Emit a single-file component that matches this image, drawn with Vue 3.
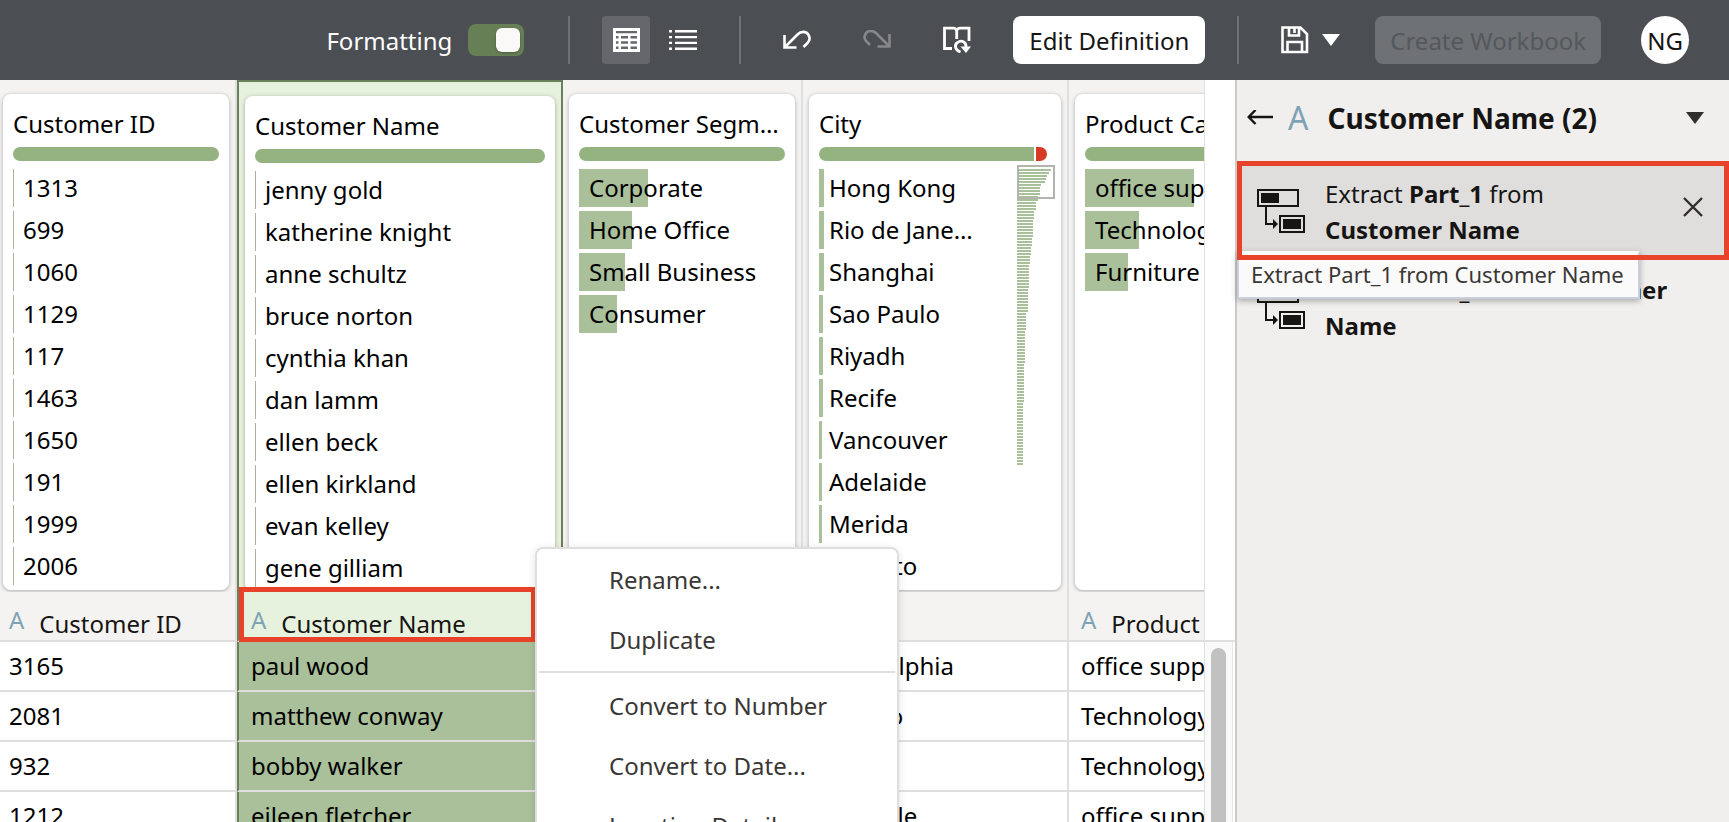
<script setup>
import { ref } from 'vue'

const formatting = ref(true)

const same = (names, width) => names.map((name) => ({ name, width }))

const columns = [
  {
    title: 'Customer ID',
    items: same(['1313', '699', '1060', '1129', '117', '1463', '1650', '191', '1999', '2006'], 1),
  },
  {
    title: 'Customer Name',
    selected: true,
    items: same(
      ['jenny gold', 'katherine knight', 'anne schultz', 'bruce norton', 'cynthia khan', 'dan lamm', 'ellen beck', 'ellen kirkland', 'evan kelley', 'gene gilliam'],
      1,
    ),
  },
  {
    title: 'Customer Segment',
    items: [
      { name: 'Corporate', width: 69 },
      { name: 'Home Office', width: 53 },
      { name: 'Small Business', width: 46 },
      { name: 'Consumer', width: 38 },
    ],
  },
  {
    title: 'City',
    invalid: true,
    minimap: true,
    items: [
      ...same(['Hong Kong', 'Rio de Janeiro', 'Shanghai'], 5),
      ...same(['Sao Paulo', 'Riyadh', 'Recife'], 4),
      ...same(['Vancouver', 'Adelaide', 'Merida', 'Toronto'], 3),
    ],
  },
  {
    title: 'Product Category',
    items: [
      { name: 'office supplies', width: 109 },
      { name: 'Technology', width: 54 },
      { name: 'Furniture', width: 43 },
    ],
  },
]

const rows = [
  ['3165', 'paul wood', 'Corporate', 'Philadelphia', 'office supplies'],
  ['2081', 'matthew conway', 'Consumer', 'Toronto', 'Technology'],
  ['932', 'bobby walker', 'Corporate', 'Recife', 'Technology'],
  ['1212', 'eileen fletcher', 'Consumer', 'Nashville', 'office supplies'],
]

const runs = [
  [34, 1], [32, 1], [30, 1], [29, 1], [28, 1], [24, 1], [23, 3], [21, 2], [19, 3], [17, 3],
  [16, 6], [15, 3], [14, 3], [13, 3], [12, 8], [11, 8], [9, 6], [8, 11], [7, 13], [6, 21],
]
const stripes = runs.flatMap(([width, count]) => Array(count).fill(width))

const steps = [
  { part: 'Part_1', active: true },
  { part: 'Part_2', active: false },
]
</script>

<template>
  <div class="app">
    <header class="toolbar">
      <label class="format" for="formatting">Formatting</label>
      <input id="formatting" v-model="formatting" class="toggle" type="checkbox" role="switch" />
      <span class="divider"></span>
      <div class="views">
        <button class="tool on" type="button" aria-label="Grid view">
          <svg width="27" height="24" viewBox="0 0 27 24">
            <path fill="#fff" fill-rule="evenodd" d="M0 0h27v24H0zM3 3v2.300h21V3zM3 8v2.500h2.500V8zM8 8v2.500h7V8zM17.500 8v2.500H24V8zM3 13.200v2.500h2.500v-2.500zM8 13.200v2.500h7v-2.500zM17.500 13.200v2.500H24v-2.500zM3 18.500V21h2.500v-2.500zM8 18.500V21h7v-2.500zM17.500 18.500V21H24v-2.500z" />
          </svg>
        </button>
        <button class="tool" type="button" aria-label="List view">
          <svg width="28" height="20" viewBox="0 0 28 20">
            <path stroke="#fff" stroke-width="2.400" d="M0 1.200h3M0 7.100h3M0 12.900h3M0 18.800h3M6 1.200h22M6 7.100h22M6 12.900h22M6 18.800h22" />
          </svg>
        </button>
      </div>
      <span class="divider"></span>
      <button class="tool" type="button" aria-label="Undo">
        <svg width="28" height="20" viewBox="0 0 28 20" fill="none" stroke="#fff" stroke-width="2.600">
          <path d="M1.500 5v12.500H13.500M2 17L14.500 4.500C18 1 23 1 25.200 4.500C27.500 8 26.500 11 24.500 13L20.500 17" />
        </svg>
      </button>
      <button class="tool" type="button" aria-label="Redo" disabled>
        <svg width="28" height="20" viewBox="0 0 28 20" fill="none" stroke="#85888b" stroke-width="2.600">
          <path d="M26.500 4v12.500H14.500M26 16L13.500 3.500C10 0 5 0 2.800 3.500C.5 7 1.500 9.500 3.500 11.500L7 15" />
        </svg>
      </button>
      <button class="tool" type="button" aria-label="Refresh data">
        <svg width="28" height="28" viewBox="0 0 28 28" fill="none" stroke="#fff" stroke-width="2.800">
          <path d="M9 22.500H1.500V2.200H10.500C12 2.200 13.700 3.200 13.700 5C13.700 3.200 15.500 2.200 17 2.200H26V15M13.700 5v8" />
          <path d="M17.500 26C12 24.500 11 19 14.500 16.500C18.500 13.500 23.500 16 23 21.500" />
          <path fill="#fff" stroke="none" d="M17.500 20.500H28L23 27z" />
        </svg>
      </button>
      <button class="primary" type="button">Edit Definition</button>
      <span class="divider"></span>
      <div class="save">
        <button class="tool" type="button" aria-label="Save">
          <svg width="28" height="28" viewBox="0 0 28 28" fill="none" stroke="#fff" stroke-width="2.600">
            <path d="M1.500 1.500H19.500L26 8V26H1.500zM8 2v7.500H18V2M6.500 26V16H21V26M13.500 2v5" />
          </svg>
        </button>
        <button class="more" type="button" aria-label="Save options">
          <svg width="18" height="12" viewBox="0 0 18 12"><path fill="#fff" d="M0 0h18L9 12z" /></svg>
        </button>
      </div>
      <button class="create" type="button" disabled>Create Workbook</button>
      <button class="avatar" type="button">NG</button>
    </header>

    <div class="body">
      <main class="workspace">
        <div class="viewport">
          <table class="grid">
            <colgroup>
              <col class="w-id" /><col class="w-name" /><col class="w-segment" /><col class="w-city" /><col class="w-product" />
            </colgroup>
            <thead>
              <tr>
                <td v-for="col in columns" :key="col.title" class="profile" :class="{ picked: col.selected }">
                  <section class="card">
                    <h2 class="card-title">{{ col.title }}</h2>
                    <div class="quality" :class="{ short: col.invalid }">
                      <span class="valid"></span>
                      <span v-if="col.invalid" class="invalid"></span>
                    </div>
                    <div class="values">
                      <ul>
                        <li v-for="item in col.items" :key="item.name">
                          <span class="bar" :class="{ thin: item.width === 1 }" :style="{ width: item.width + 'px' }"></span>
                          <span class="value">{{ item.name }}</span>
                        </li>
                      </ul>
                      <div v-if="col.minimap" class="minimap">
                        <span v-for="(w, i) in stripes" :key="i" class="stripe" :style="{ width: w + 'px' }"></span>
                        <span class="window"></span>
                      </div>
                    </div>
                  </section>
                </td>
              </tr>
              <tr>
                <th v-for="col in columns" :key="col.title" scope="col" class="head" :class="{ picked: col.selected }">
                  <span class="head-in"><span class="type">A</span><span>{{ col.title }}</span></span>
                  <span v-if="col.selected" class="head-mark"></span>
                </th>
              </tr>
            </thead>
            <tbody>
              <tr v-for="row in rows" :key="row[0]">
                <td v-for="(cell, i) in row" :key="i" class="cell" :class="{ picked: columns[i].selected }">{{ cell }}</td>
              </tr>
            </tbody>
          </table>
        </div>
        <div class="gutter">
          <div class="gutter-top"></div>
          <div class="track"><div class="thumb"></div></div>
        </div>

        <div class="menu" role="menu">
          <button type="button" role="menuitem">Rename...</button>
          <button type="button" role="menuitem">Duplicate</button>
          <hr />
          <button type="button" role="menuitem">Convert to Number</button>
          <button type="button" role="menuitem">Convert to Date...</button>
          <button type="button" role="menuitem">Location Details...</button>
        </div>
      </main>

      <aside class="panel">
        <div class="panel-head">
          <button class="plain" type="button" aria-label="Back">
            <svg width="26" height="16" viewBox="0 0 26 16" fill="none" stroke="#161513" stroke-width="2.400">
              <path d="M26 7H2M8.500 0L1.700 7L8.500 14" />
            </svg>
          </button>
          <span class="type big">A</span>
          <h1>Customer Name (2)</h1>
          <button class="plain" type="button" aria-label="Column options">
            <svg width="18" height="12" viewBox="0 0 18 12"><path fill="#312d2a" d="M0 0h18L9 12z" /></svg>
          </button>
        </div>
        <ol class="steps">
          <li v-for="step in steps" :key="step.part" class="step" :class="{ active: step.active }">
            <svg class="step-icon" width="48" height="44" viewBox="0 0 48 44" fill="none" stroke="#161513" stroke-width="2">
              <rect x="1" y="1" width="40" height="16" />
              <rect x="4" y="4" width="18" height="10" fill="#161513" stroke="none" />
              <path d="M9 17v18h8" />
              <path d="M16 30l5 5l-5 5z" fill="#161513" stroke="none" />
              <rect x="23" y="27" width="24" height="16" />
              <rect x="26" y="30" width="18" height="10" fill="#161513" stroke="none" />
            </svg>
            <p>Extract <b>{{ step.part }}</b> from <b>Customer Name</b></p>
            <button v-if="step.active" class="plain" type="button" aria-label="Remove step">
              <svg width="20" height="20" viewBox="0 0 20 20" stroke="#312d2a" stroke-width="2.400">
                <path d="M1 1l18 18M19 1L1 19" />
              </svg>
            </button>
            <span v-if="step.active" class="tip" role="tooltip">Extract Part_1 from Customer Name</span>
            <span v-if="step.active" class="step-mark"></span>
          </li>
        </ol>
      </aside>
    </div>
  </div>
</template>

<style>
html,
body {
  margin: 0;
  overflow: hidden;
}
</style>

<style scoped>
* {
  box-sizing: border-box;
}
.app {
  display: flex;
  flex-direction: column;
  height: 100vh;
  overflow: hidden;
  font-family: 'Noto Sans', 'Open Sans', sans-serif;
  font-size: 24px;
  color: #000;
  background: #fff;
}
button {
  font: inherit;
  border: 0;
  padding: 0;
  background: none;
}
h1,
h2,
p,
ul,
ol {
  margin: 0;
  padding: 0;
  list-style: none;
}
svg {
  display: block;
}

.toolbar {
  display: flex;
  align-items: center;
  justify-content: flex-end;
  gap: 32px;
  flex: none;
  height: 80px;
  padding: 0 40px;
  background: #4b4e53;
}
.format {
  margin-right: -16px;
  color: #fff;
}
.toggle {
  appearance: none;
  display: flex;
  justify-content: flex-end;
  width: 56px;
  height: 32px;
  margin: 0 12px 0 0;
  padding: 4px;
  border-radius: 8px;
  background: #677f55;
}
.toggle::before {
  content: '';
  width: 24px;
  height: 24px;
  border-radius: 6px;
  background: #fbf9f8;
  box-shadow: 0 1px 3px rgba(0, 0, 0, 0.3);
}
.divider {
  width: 2px;
  height: 48px;
  background: #6e7175;
}
.views {
  display: flex;
  gap: 9px;
}
.tool {
  display: grid;
  place-items: center;
  width: 48px;
  height: 48px;
  border-radius: 4px;
}
.tool.on {
  background: #65676d;
}
.primary,
.create {
  height: 48px;
  border-radius: 8px;
  padding: 0 16px;
  background: #fff;
  color: #161513;
  white-space: nowrap;
}
.save {
  display: flex;
}
.more {
  display: grid;
  place-items: center;
  width: 24px;
}
.create {
  padding: 0 15px;
  background: #6e7175;
  color: #55585d;
}
.avatar {
  width: 48px;
  height: 48px;
  margin-left: 8px;
  border-radius: 50%;
  background: #fff;
  color: #161513;
}

.body {
  display: flex;
  flex: 1;
  min-height: 0;
}
.workspace {
  position: relative;
  display: flex;
  flex: 1;
  min-width: 0;
  overflow: hidden;
}
.viewport {
  flex: 1;
  min-width: 0;
  overflow: hidden;
}
.grid {
  width: 1312px;
  margin-left: -3px;
  table-layout: fixed;
  border-collapse: separate;
  border-spacing: 0;
}
.w-id,
.w-segment,
.w-product {
  width: 240px;
}
.w-name {
  width: 326px;
}
.w-city {
  width: 266px;
}
.profile,
.head {
  background: #f4f3f2;
  border-right: 2px solid #e0dfde;
}
.profile {
  padding: 14px 6px 0;
  vertical-align: top;
}
.profile.picked {
  background: #e6f2dd;
  border: solid #6a7f5b;
  border-width: 2px 2px 0;
}
.card {
  min-height: 496px;
  padding: 11px 10px 5px;
  border-radius: 8px;
  background: #fff;
  box-shadow: 0 1px 4px rgba(0, 0, 0, 0.3);
}
.card-title {
  overflow: hidden;
  font-size: 24px;
  font-weight: 400;
  line-height: 38px;
  text-overflow: ellipsis;
  white-space: nowrap;
}
.quality {
  display: flex;
  gap: 2px;
  height: 14px;
  margin: 4px 0 8px;
  overflow: hidden;
  border-radius: 7px;
}
.quality.short {
  margin-right: 4px;
}
.valid {
  flex: 1;
  background: #95b381;
}
.invalid {
  width: 11px;
  background: #d63b25;
}
.values {
  display: flex;
  justify-content: space-between;
}
.values ul {
  display: flex;
  flex: 1;
  flex-direction: column;
  gap: 4px;
  min-width: 0;
}
.values li {
  display: grid;
  height: 38px;
  line-height: 38px;
}
.bar,
.value {
  grid-area: 1 / 1;
}
.bar {
  background: #aac09a;
}
.bar.thin {
  background: #a9b09f;
}
.value {
  padding-left: 10px;
  overflow: hidden;
  text-overflow: ellipsis;
  white-space: nowrap;
}
.minimap {
  position: relative;
  display: flex;
  flex: none;
  flex-direction: column;
  gap: 1px;
  width: 34px;
  height: 0;
  margin-left: 40px;
}
.stripe {
  flex: none;
  height: 2px;
  background: #aac09a;
}
.window {
  position: absolute;
  top: -4px;
  left: 0;
  width: 38px;
  height: 34px;
  border: 2px solid #b2b5ad;
}

.head {
  position: relative;
  height: 50px;
  padding: 16px 0 0 12px;
  border-bottom: 2px solid #e0dfde;
  color: #161513;
  font-weight: 400;
  text-align: left;
}
.head.picked {
  background: #e6f2dd;
  border-right-color: #6a7f5b;
  border-left: 2px solid #6a7f5b;
}
.head-in {
  display: flex;
  gap: 15px;
  line-height: 32px;
  white-space: nowrap;
}
.type {
  color: #7fa3b5;
  line-height: 24px;
}
.head-mark {
  position: absolute;
  top: -5px;
  right: 25px;
  bottom: -2px;
  left: 0;
  border: 5px solid #e8432a;
}
.cell {
  height: 50px;
  padding: 0 0 0 12px;
  border-right: 2px solid #e0dfde;
  border-bottom: 2px solid #e0dfde;
  background: #fff;
  line-height: 48px;
  overflow: hidden;
  white-space: nowrap;
}
.cell.picked {
  border-left: 2px solid #6a7f5b;
  border-right-color: #6a7f5b;
  background: #aac09a;
}

.gutter {
  display: flex;
  flex: none;
  flex-direction: column;
  width: 31px;
  border-left: 1px solid #e0dfde;
}
.gutter-top {
  flex: none;
  height: 562px;
  border-bottom: 2px solid #e0dfde;
}
.track {
  flex: 1;
  margin-right: 2px;
  padding: 6px 6px 0;
  border-right: 1px solid #e8e8e8;
  background: #fafafa;
}
.thumb {
  height: 100%;
  border-radius: 8px 8px 0 0;
  background: #c1c1c1;
}

.menu {
  position: absolute;
  top: 467px;
  left: 535px;
  z-index: 3;
  width: 364px;
  border: 2px solid #dfdedd;
  border-radius: 8px;
  background: #fff;
  box-shadow: 0 2px 8px rgba(0, 0, 0, 0.12);
}
.menu button {
  display: block;
  width: 100%;
  height: 60px;
  padding-left: 72px;
  color: #3a3735;
  text-align: left;
}
.menu hr {
  height: 2px;
  margin: 2px;
  border: 0;
  background: #e0dfde;
}

.panel {
  flex: none;
  width: 494px;
  border-left: 2px solid #cbcbcb;
  background: #f0efed;
}
.panel-head {
  display: flex;
  align-items: center;
  height: 84px;
  padding: 0 25px 8px 10px;
}
.type.big {
  margin: 0 19px 0 15px;
  font-size: 32px;
  line-height: 40px;
}
.panel-head h1 {
  flex: 1;
  color: #161513;
  font-size: 28px;
  line-height: 40px;
  white-space: nowrap;
}
.step {
  position: relative;
  display: flex;
  align-items: flex-start;
  min-height: 96px;
  padding: 12px 26px 12px 20px;
  color: #161513;
  line-height: 36px;
}
.step.active {
  background: #dfdedc;
}
.step-icon {
  flex: none;
  margin: 13px 20px 0 0;
}
.step p {
  flex: 1;
}
.step .plain {
  margin: 21px 0 0 32px;
}
.tip {
  position: absolute;
  top: 87px;
  left: 0;
  z-index: 1;
  padding: 0 14px 2px 12px;
  border: 2px solid #c9d0d9;
  border-top-color: #fff;
  background: #fafafb;
  box-shadow: 0 2px 6px rgba(0, 0, 0, 0.3);
  color: #3a3735;
  font-size: 22px;
  line-height: 42px;
  white-space: nowrap;
}
.step-mark {
  position: absolute;
  inset: -3px 0 0;
  z-index: 2;
  border: 5px solid #e8432a;
}
</style>
